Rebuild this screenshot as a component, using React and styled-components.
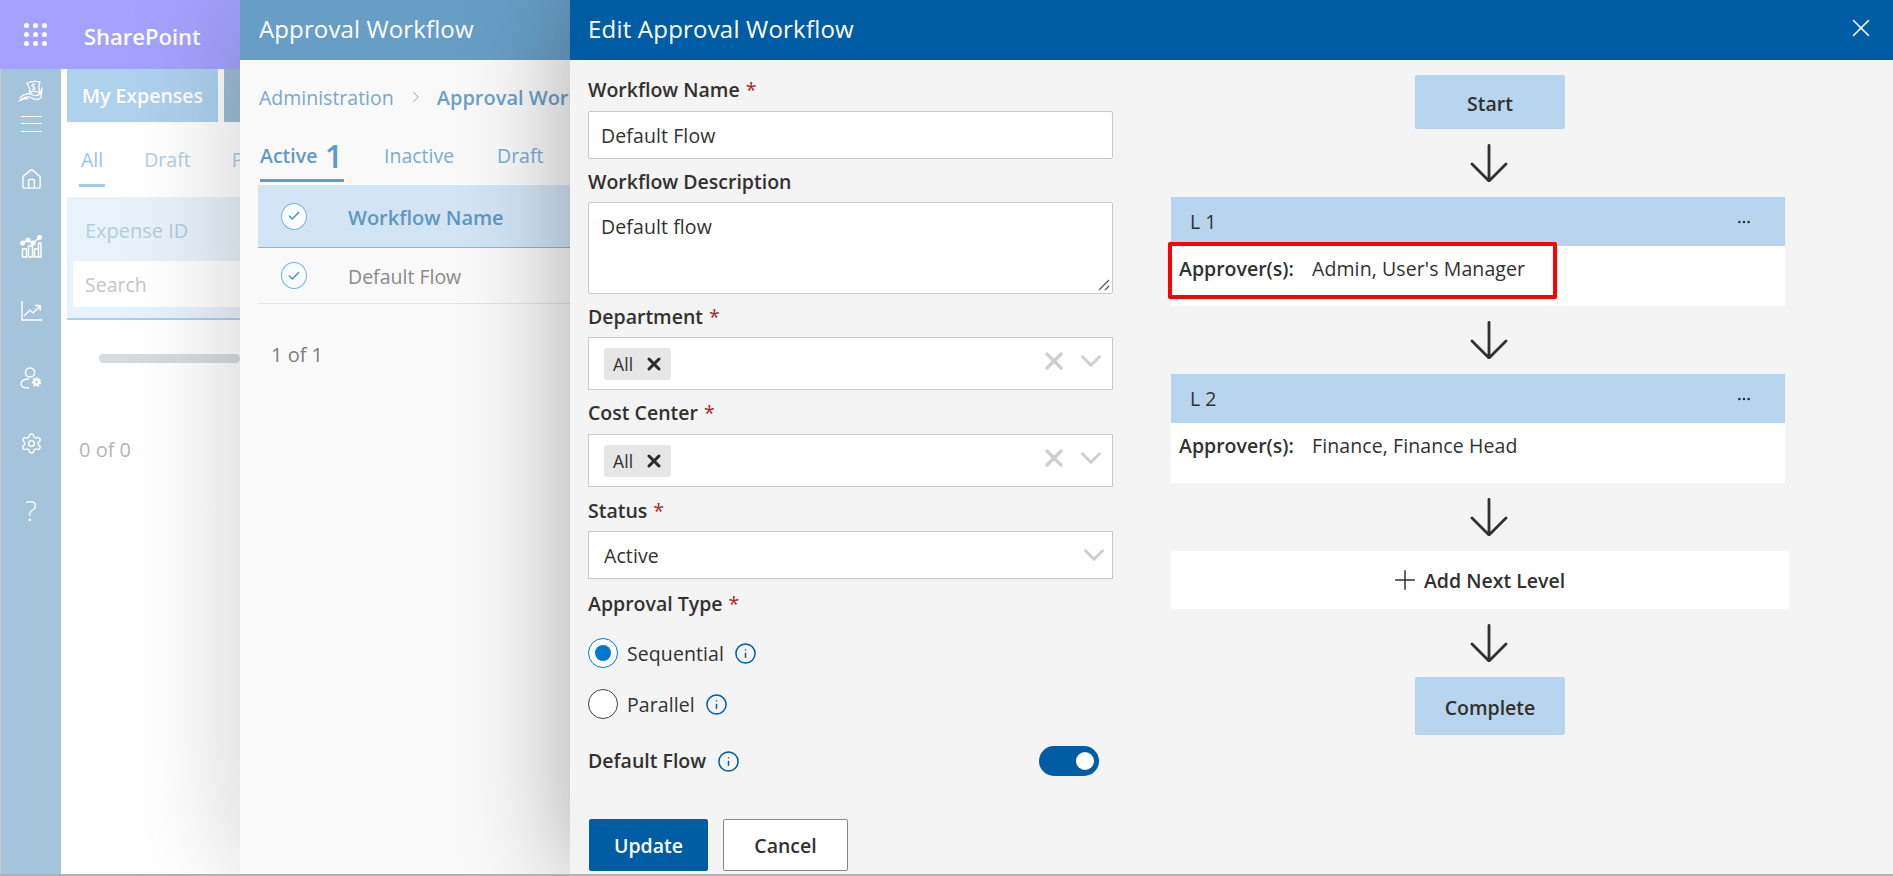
import React from "react";
import styled, { createGlobalStyle } from "styled-components";
import { House, Settings, ChevronRight, ChevronDown, X, Info, Check, Plus, Ellipsis } from "lucide-react";

const Global = createGlobalStyle`
  html, body { margin: 0; padding: 0; height: 100%; background: #b3b0ae; overflow: hidden; }
  body { font-family: "Open Sans", "Noto Sans", sans-serif; color: #323130; }
  * { box-sizing: border-box; }
`;

const Page = styled.div`
  position: relative;
  width: 1893px;
  height: 874px;
  overflow: hidden;
  display: flex;
  flex-direction: column;
  background: #fff;
`;
const TopBar = styled.header`
  height: 69px;
  flex: none;
  display: flex;
  align-items: center;
  background: #a3a3ff;
  color: #fff;
`;
const Waffle = styled.div`
  width: 84px;
  padding-left: 24px;
  display: grid;
  grid-template-columns: repeat(3, 5px);
  gap: 4.2px;
  div { width: 5px; height: 5px; border-radius: 50%; background: #fff; }
`;
const Brand = styled.div`
  font-size: 22px;
  font-weight: 600;
  margin-top: 2px;
`;
const Shell = styled.div`
  flex: 1;
  display: flex;
  min-height: 0;
`;
const Sidebar = styled.nav`
  width: 61px;
  flex: none;
  background: #a4c4dc;
  border-left: 1px solid #c9c9c9;
  display: flex;
  flex-direction: column;
  align-items: center;
  color: #fff;
  padding-top: 13px;
`;
const SideSlot = styled.div`
  height: ${(p) => p.$h}px;
  display: flex;
  justify-content: center;
  align-items: center;
`;
const Hamburger = styled.div`
  width: 21px;
  height: 16px;
  border-top: 1px solid #fff;
  border-bottom: 1px solid #fff;
  position: relative;
  &::after { content: ""; position: absolute; left: 0; right: 0; top: 6px; height: 1px; background: #fff; }
`;
const Help = styled.span`
  font-size: 28px;
  font-weight: 300;
  line-height: 1;
`;
const Main = styled.main`
  width: 179px;
  flex: none;
  overflow: hidden;
  padding-left: 6px;
`;
const TabBar = styled.div`
  display: flex;
  gap: 6px;
  height: 53px;
`;
const TopTab = styled.div`
  width: ${(p) => p.$w}px;
  flex: none;
  background: ${(p) => p.$bg};
  color: #fff;
  font-size: 19.5px;
  font-weight: 600;
  line-height: 53px;
  padding-left: 15px;
`;
const SubTabs = styled.div`
  display: flex;
  height: 65px;
  margin: 0 0 10px 12px;
  padding-top: 26px;
  gap: 37px;
`;
const SubTab = styled.div`
  height: 39px;
  padding: 0 2px;
  font-size: 19.5px;
  line-height: 24px;
  white-space: nowrap;
  color: ${(p) => (p.$active ? "#9cc3e4" : "#b4cde3")};
  border-bottom: 3px solid ${(p) => (p.$active ? "#a4c8e6" : "transparent")};
`;
const FilterHead = styled.div`
  height: 123px;
  padding: 22px 0 0 6px;
  background: #e8f2fa;
  border-bottom: 2px solid #a9d0ef;
`;
const FilterLabel = styled.div`
  padding-left: 12px;
  font-size: 20px;
  font-weight: 500;
  line-height: 24px;
  color: #b3cde0;
`;
const FilterInput = styled.div`
  margin-top: 18px;
  height: 46px;
  padding-left: 12px;
  background: #fff;
  font-size: 19.5px;
  line-height: 48px;
  color: #c6c6c6;
`;
const Scrollbar = styled.div`
  margin: 34px 0 0 32px;
  height: 9px;
  border-radius: 5px;
  background: #d8dbdd;
`;
const Pager = styled.div`
  margin: ${(p) => p.$m};
  font-size: 20px;
  line-height: 24px;
  color: ${(p) => p.$c};
`;

const Panel = styled.section`
  position: absolute;
  top: 0;
  bottom: 0;
  left: 240px;
  width: 330px;
  overflow: hidden;
  background: #f9f9f9;
  box-shadow: 0 0 120px rgba(0, 0, 0, 0.2);
`;
const PanelHead = styled.div`
  height: 60px;
  padding-left: 19px;
  background: #689ec6;
  color: #fff;
  font-size: 24px;
  letter-spacing: 0.12px;
  line-height: 57px;
  white-space: nowrap;
`;
const Crumbs = styled.div`
  margin: 25px 0 0 19px;
  display: flex;
  align-items: center;
  height: 24px;
  font-size: 19.5px;
  color: #7ba7cc;
  white-space: nowrap;
`;
const CrumbNow = styled.span`
  font-size: 20px;
  font-weight: 600;
  color: #6c9fc8;
  margin-left: 12px;
`;
const CrumbSep = styled.span`
  display: flex;
  margin-left: 13px;
  color: #7ba7cc;
`;
const WfTabs = styled.div`
  margin: 35px 0 3px 20px;
  display: flex;
  height: 38px;
`;
const WfTab = styled.div`
  height: 38px;
  margin-right: ${(p) => p.$mr}px;
  width: ${(p) => p.$w}px;
  flex: none;
  display: flex;
  justify-content: space-between;
  font-size: 19.5px;
  line-height: 24px;
  font-weight: ${(p) => (p.$active ? 600 : 400)};
  color: ${(p) => (p.$active ? "#5f9ac8" : "#7eabd0")};
  border-bottom: ${(p) => (p.$active ? "3px solid #659cc6" : "none")};
`;
const Count = styled.span`
  font-size: 32px;
  font-weight: 600;
  line-height: 24px;
  margin-right: 1px;
`;
const TableRow = styled.div`
  margin-left: 18px;
  height: ${(p) => p.$h}px;
  display: flex;
  align-items: center;
  padding-left: 23px;
  background: ${(p) => (p.$head ? "#d3e5f4" : "transparent")};
  border-bottom: 1px solid ${(p) => (p.$head ? "#7fb8e6" : "#e4e4e4")};
`;
const CheckDot = styled.span`
  width: 26px;
  height: 27px;
  flex: none;
  border-radius: 50%;
  border: 1.5px solid #72b3e8;
  background: #fafdff;
  color: #4d8fc7;
  display: flex;
  align-items: center;
  justify-content: center;
`;
const Cell = styled.span`
  margin-left: 41px;
  padding-top: 2px;
  white-space: nowrap;
  font-size: ${(p) => (p.$head ? "20px" : "19.5px")};
  font-weight: ${(p) => (p.$head ? 600 : 400)};
  color: ${(p) => (p.$head ? "#5f97c3" : "#8a8a8a")};
`;

const Modal = styled.section`
  position: absolute;
  top: 0;
  bottom: 0;
  right: 0;
  left: 570px;
  background: #f4f4f4;
  box-shadow: 0 0 100px rgba(0, 0, 0, 0.33);
  display: flex;
  flex-direction: column;
`;
const ModalHead = styled.div`
  height: 60px;
  flex: none;
  padding: 0 17px 4px 18px;
  background: #005ca3;
  color: #fff;
  display: flex;
  align-items: center;
  justify-content: space-between;
`;
const ModalTitle = styled.h1`
  margin: 0;
  font-size: 24px;
  font-weight: 400;
  letter-spacing: 0.2px;
`;
const ModalBody = styled.div`
  flex: 1;
  display: flex;
  padding-left: 18px;
  min-height: 0;
`;
const Form = styled.div`
  width: 525px;
  flex: none;
  padding-top: 18px;
`;
const Field = styled.div`
  margin-bottom: ${(p) => p.$after ?? 11}px;
`;
const Label = styled.div`
  height: 24px;
  margin-bottom: ${(p) => p.$gap ?? 8}px;
  font-size: 19.5px;
  font-weight: 600;
  line-height: 24px;
  color: #323130;
  white-space: nowrap;
`;
const Req = styled.span`
  color: #a4262c;
  font-weight: 400;
  margin-left: 6px;
`;
const TextBox = styled.div`
  height: ${(p) => p.$h}px;
  padding: 12px;
  background: #fff;
  border: 1px solid #c8c8c8;
  border-radius: 2px;
  font-size: 19.5px;
  letter-spacing: 0.1px;
  line-height: 24px;
  color: #323130;
  position: relative;
`;
const Grip = styled.svg`
  position: absolute;
  right: 2px;
  bottom: 2px;
`;
const Select = styled.div`
  height: ${(p) => p.$h}px;
  display: flex;
  align-items: center;
  padding-left: ${(p) => p.$pl}px;
  background: #fff;
  border: 1px solid #c8c8c8;
  font-size: 19.5px;
  letter-spacing: 0.1px;
  color: #323130;
`;
const Chip = styled.span`
  width: 67px;
  height: 32px;
  flex: none;
  padding: 0 7px 0 9px;
  display: flex;
  align-items: center;
  justify-content: space-between;
  background: #e6e6e6;
  border-radius: 3px;
  font-size: 17.5px;
`;
const SelectTools = styled.span`
  margin-left: auto;
  display: flex;
  align-items: center;
  gap: 6px;
  padding-right: ${(p) => p.$pr}px;
  margin-top: ${(p) => p.$mt}px;
  color: #cfcfcf;
`;
const RadioRow = styled.div`
  height: 30px;
  margin-bottom: ${(p) => p.$after}px;
  display: flex;
  align-items: center;
  font-size: 19.5px;
  letter-spacing: 0.1px;
`;
const Radio = styled.span`
  width: 30px;
  height: 30px;
  flex: none;
  margin-right: 9px;
  border-radius: 50%;
  background: #fff;
  border: 1.5px solid ${(p) => (p.$on ? "#0078d4" : "#444")};
  display: flex;
  align-items: center;
  justify-content: center;
  &::after {
    content: "";
    width: 16px;
    height: 16px;
    border-radius: 50%;
    background: ${(p) => (p.$on ? "#0078d4" : "transparent")};
  }
`;
const Hint = styled.span`
  display: flex;
  margin-left: ${(p) => p.$ml ?? 10}px;
  color: #005ca3;
`;
const ToggleRow = styled.div`
  height: 30px;
  display: flex;
  align-items: center;
  padding-right: 14px;
  margin-bottom: 43px;
`;
const ToggleLabel = styled(Label)`
  height: auto;
  margin: 0;
`;
const Toggle = styled.span`
  margin-left: auto;
  width: 60px;
  height: 30px;
  padding-right: 5px;
  border-radius: 15px;
  background: #005ca3;
  display: flex;
  align-items: center;
  justify-content: flex-end;
  &::after { content: ""; width: 18px; height: 18px; border-radius: 50%; background: #fff; }
`;
const Actions = styled.div`
  display: flex;
  gap: 15px;
  padding-left: 1px;
`;
const Btn = styled.button`
  width: ${(p) => p.$w}px;
  height: 52px;
  padding: 0;
  border-radius: 2px;
  font-family: inherit;
  font-size: 19.5px;
  font-weight: 600;
  color: ${(p) => (p.$primary ? "#fff" : "#323130")};
  background: ${(p) => (p.$primary ? "#005ca3" : "#fff")};
  border: 1px solid ${(p) => (p.$primary ? "#005ca3" : "#8a8886")};
`;
const Flow = styled.div`
  width: 638px;
  margin-left: 58px;
  padding-top: 15px;
  display: flex;
  flex-direction: column;
  align-items: center;
`;
const Terminal = styled.div`
  width: 150px;
  height: ${(p) => p.$h}px;
  background: #b7d5ee;
  border-radius: 2px;
  display: flex;
  align-items: center;
  justify-content: center;
  font-size: 19.5px;
  font-weight: 600;
  color: #323130;
  padding-top: 2px;
`;
const Arrow = styled.div`
  height: 38px;
  margin: 15px 2px 15px 0;
  color: #323130;
  display: flex;
  align-items: center;
  justify-content: center;
`;
const Level = styled.div`
  width: 614px;
  align-self: flex-start;
  background: #fff;
  position: relative;
`;
const LevelHead = styled.div`
  height: 49px;
  padding: 0 33px 0 19px;
  background: #b7d5ee;
  display: flex;
  align-items: center;
  justify-content: space-between;
  font-size: 19.5px;
  font-weight: 500;
  color: #323130;
`;
const LevelBody = styled.div`
  height: 60px;
  padding: 11px 0 0 8px;
  display: flex;
  font-size: 19.5px;
  letter-spacing: 0.1px;
  line-height: 24px;
`;
const ApproverKey = styled.span`
  width: 133px;
  letter-spacing: 0;
  font-weight: 600;
`;
const Highlight = styled.div`
  position: absolute;
  left: -3px;
  top: 45px;
  width: 389px;
  height: 57px;
  border: 4px solid #ff0000;
  border-radius: 2px;
`;
const AddLevel = styled.div`
  width: 618px;
  height: 58px;
  align-self: flex-start;
  padding-right: 6px;
  background: #fff;
  border-radius: 2px;
  display: flex;
  align-items: center;
  justify-content: center;
  gap: 3px;
  font-size: 19.5px;
  font-weight: 600;
`;

const dots = Array.from({ length: 9 });

const DownArrow = () => (
  <Arrow>
    <svg width="38" height="38" viewBox="0 0 38 38" fill="none" stroke="currentColor" strokeWidth="2.8" strokeLinecap="round" strokeLinejoin="round">
      <path d="M19 1.5v35M2 20l17 17 17-17" />
    </svg>
  </Arrow>
);

const LogoIcon = () => (
  <svg width="26" height="24" viewBox="0 0 26 24" fill="none" stroke="#fff" strokeWidth="1.3" strokeLinecap="round" strokeLinejoin="round">
    <path d="M9 3c4-2 9-2 13-1-2 4-1 8 0 11-3-2-7-2-10-.5C12 9 11 6 9 3Z" />
    <path d="M2 18c4-5 10-5 13-3 3 1 5 1 7-1l2-6-1 10c-3 2-6 2-9 0-4-2-8-1-11 2" />
    <path d="M1 21c3-2 6-3 9-2" />
    <text x="13" y="10" fontSize="8" fill="#fff" stroke="none" fontFamily="Open Sans" fontWeight="600">$</text>
  </svg>
);
const BarsIcon = () => (
  <svg width="22" height="23" viewBox="0 0 22 23" fill="none" stroke="#fff" strokeWidth="1.5" strokeLinejoin="round">
    <path d="M2.5 14v8h4v-8zM8.5 11v11h4V11zM14.5 14v8h4v-8zM18.5 8v14h2.5V8z" />
    <path d="M2 8l6-3 5 3 7-6" />
    <circle cx="2.5" cy="8" r="1.8" fill="#fff" />
    <circle cx="8" cy="5" r="1.8" fill="#fff" />
    <circle cx="13" cy="8" r="1.8" fill="#fff" />
    <circle cx="19.5" cy="2.5" r="1.8" fill="#fff" />
  </svg>
);
const LineIcon = () => (
  <svg width="21" height="20" viewBox="0 0 21 20" fill="none" stroke="#fff" strokeWidth="1.4" strokeLinejoin="round">
    <path d="M1 0v19h20" />
    <path d="M3 15l6-6 3 3 7-7M14 4.5h5.2v5" />
  </svg>
);
const UserGearIcon = () => (
  <svg width="23" height="22" viewBox="0 0 23 22" fill="none" stroke="#fff" strokeWidth="1.5">
    <circle cx="10" cy="5.5" r="4.6" />
    <path d="M9 12C4 12 1 14 1 17c0 3 4 4 8 4" />
    <circle cx="16.5" cy="15" r="3.4" fill="#fff" stroke="#fff" strokeWidth="2.5" strokeDasharray="2 1" />
    <circle cx="16.5" cy="15" r="1.2" fill="#a4c4dc" stroke="none" />
  </svg>
);
const InfoMark = () => <Info size={23} strokeWidth={1.5} absoluteStrokeWidth />;
const Chevron = () => <ChevronDown size={34} strokeWidth={3} absoluteStrokeWidth />;

const SelectField = ({ label, gap, after }) => (
  <Field $after={after}>
    <Label $gap={gap}>{label}<Req>*</Req></Label>
    <Select $h={53} $pl={15}>
      <Chip>All <X size={20} strokeWidth={3} absoluteStrokeWidth color="#2b2b2b" /></Chip>
      <SelectTools $pr={4} $mt={-5}>
        <X size={28} strokeWidth={3.5} absoluteStrokeWidth />
        <Chevron />
      </SelectTools>
    </Select>
  </Field>
);

const LevelCard = ({ name, approvers, marked }) => (
  <Level>
    <LevelHead>{name}<Ellipsis size={16} strokeWidth={2} /></LevelHead>
    <LevelBody>
      <ApproverKey>Approver(s):</ApproverKey>
      <span>{approvers}</span>
    </LevelBody>
    {marked && <Highlight />}
  </Level>
);

export default function App() {
  return (
    <Page>
      <Global />
      <TopBar>
        <Waffle>{dots.map((_, i) => <div key={i} />)}</Waffle>
        <Brand>SharePoint</Brand>
      </TopBar>
      <Shell>
        <Sidebar>
          <SideSlot $h={20}><LogoIcon /></SideSlot>
          <SideSlot $h={44}><Hamburger /></SideSlot>
          <SideSlot $h={66}><House size={23} strokeWidth={1.5} /></SideSlot>
          <SideSlot $h={68}><BarsIcon /></SideSlot>
          <SideSlot $h={62}><LineIcon /></SideSlot>
          <SideSlot $h={72}><UserGearIcon /></SideSlot>
          <SideSlot $h={58}><Settings size={23} strokeWidth={1.5} /></SideSlot>
          <SideSlot $h={76}><Help>?</Help></SideSlot>
        </Sidebar>
        <Main>
          <TabBar>
            <TopTab $w={151} $bg="#aed1ee">My Expenses</TopTab>
            <TopTab $w={40} $bg="#9dbdd8" />
          </TabBar>
          <SubTabs>
            <SubTab $active>All</SubTab>
            <SubTab>Draft</SubTab>
            <SubTab>Pending</SubTab>
          </SubTabs>
          <FilterHead>
            <FilterLabel>Expense ID</FilterLabel>
            <FilterInput>Search</FilterInput>
          </FilterHead>
          <Scrollbar />
          <Pager $m="75px 0 0 12px" $c="#b5b5b5">0 of 0</Pager>
        </Main>
      </Shell>

      <Panel>
        <PanelHead>Approval Workflow</PanelHead>
        <Crumbs>
          Administration
          <CrumbSep><ChevronRight size={18} strokeWidth={1.3} /></CrumbSep>
          <CrumbNow>Approval Workflow</CrumbNow>
        </Crumbs>
        <WfTabs>
          <WfTab $active $w={84} $mr={40}>Active <Count>1</Count></WfTab>
          <WfTab $w={70} $mr={43}>Inactive</WfTab>
          <WfTab $w={46} $mr={0}>Draft</WfTab>
        </WfTabs>
        <TableRow $head $h={63}>
          <CheckDot><Check size={14} strokeWidth={2.4} /></CheckDot>
          <Cell $head>Workflow Name</Cell>
        </TableRow>
        <TableRow $h={56}>
          <CheckDot><Check size={14} strokeWidth={2.4} /></CheckDot>
          <Cell>Default Flow</Cell>
        </TableRow>
        <Pager $m="39px 0 0 31px" $c="#7d7d7d">1 of 1</Pager>
      </Panel>

      <Modal>
        <ModalHead>
          <ModalTitle>Edit Approval Workflow</ModalTitle>
          <X size={30} strokeWidth={1.6} absoluteStrokeWidth />
        </ModalHead>
        <ModalBody>
          <Form>
            <Field>
              <Label $gap={9}>Workflow Name<Req>*</Req></Label>
              <TextBox $h={48}>Default Flow</TextBox>
            </Field>
            <Field>
              <Label>Workflow Description</Label>
              <TextBox $h={92}>
                Default flow
                <Grip width="12" height="12" viewBox="0 0 12 12" stroke="#555" strokeWidth="1.2">
                  <path d="M1 11 11 1M7 11l4-4" />
                </Grip>
              </TextBox>
            </Field>
            <SelectField label="Department" gap={8} />
            <SelectField label="Cost Center" gap={9} after={12} />
            <Field $after={13}>
              <Label>Status<Req>*</Req></Label>
              <Select $h={48} $pl={15}>
                Active
                <SelectTools $pr={1} $mt={0}><Chevron /></SelectTools>
              </Select>
            </Field>
            <Label $gap={22}>Approval Type<Req>*</Req></Label>
            <RadioRow $after={21}>
              <Radio $on />Sequential<Hint><InfoMark /></Hint>
            </RadioRow>
            <RadioRow $after={27}>
              <Radio />Parallel<Hint><InfoMark /></Hint>
            </RadioRow>
            <ToggleRow>
              <ToggleLabel>Default Flow</ToggleLabel>
              <Hint $ml={11}><InfoMark /></Hint>
              <Toggle />
            </ToggleRow>
            <Actions>
              <Btn $primary $w={119}>Update</Btn>
              <Btn $w={125}>Cancel</Btn>
            </Actions>
          </Form>
          <Flow>
            <Terminal $h={54}>Start</Terminal>
            <DownArrow />
            <LevelCard name="L 1" approvers="Admin, User's Manager" marked />
            <DownArrow />
            <LevelCard name="L 2" approvers="Finance, Finance Head" />
            <DownArrow />
            <AddLevel><Plus size={32} strokeWidth={1.5} absoluteStrokeWidth />Add Next Level</AddLevel>
            <DownArrow />
            <Terminal $h={58}>Complete</Terminal>
          </Flow>
        </ModalBody>
      </Modal>
    </Page>
  );
}
